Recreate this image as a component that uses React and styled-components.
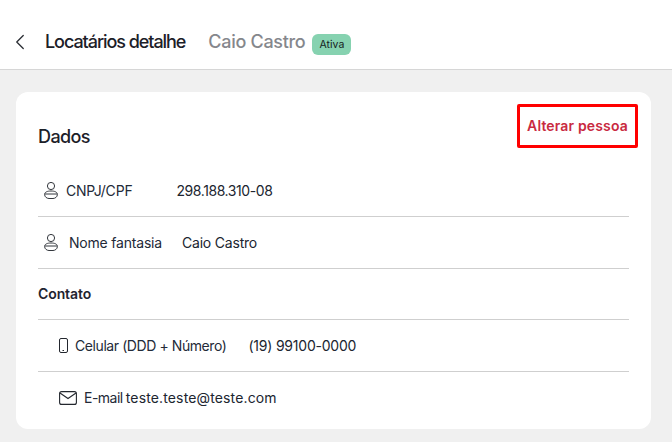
import styled, { createGlobalStyle } from "styled-components";
import { ChevronLeft } from "lucide-react";

const GlobalStyle = createGlobalStyle`
  html, body {
    margin: 0;
    padding: 0;
    height: 100%;
    overflow: hidden;
    background: #f0f0f0;
    font-family: "Inter", "Liberation Sans", sans-serif;
    color: #1f2430;
  }
`;

const PersonIcon = () => (
  <svg width="14" height="17" viewBox="0 0 14 17" fill="none" stroke="#33373d" strokeWidth="1">
    <circle cx="7" cy="4" r="3.6" />
    <path d="M.6 12.5C.6 10 3.4 9 7 9s6.4 1 6.4 3.5c0 2.5-2.4 4-4.4 4H5c-2 0-4.4-1.5-4.4-4z" />
    <path d="M.8 12h12.4" />
  </svg>
);

const PhoneIcon = () => (
  <svg width="9" height="15" viewBox="0 0 9 15" fill="none" stroke="#23272e" strokeWidth="1">
    <rect x=".5" y=".5" width="8" height="14" rx="1.5" />
    <path d="M3.5 12.5H5" />
  </svg>
);

const MailIcon = () => (
  <svg width="18" height="14" viewBox="0 0 18 14" fill="none" stroke="#23272e" strokeWidth="1.1">
    <rect x=".6" y=".6" width="16.8" height="12.8" rx="2" />
    <path d="M1 2l8 5.5L17 2" />
  </svg>
);

const App = () => {
  return (
    <>
      <GlobalStyle />
      <Header>
        <BackButton>
          <ChevronLeft size={26} strokeWidth={1.2} />
        </BackButton>
        <Title>Locatários detalhe</Title>
        <Subtitle>Caio Castro</Subtitle>
        <Badge>Ativa</Badge>
      </Header>
      <Main>
        <Card>
          <CardHead>
            <SectionTitle>Dados</SectionTitle>
            <ChangeButton>Alterar pessoa</ChangeButton>
          </CardHead>
          <Rows>
            <Row $left={6} $iconGap={8} $gap={44} $valueSpacing={-0.42}>
              <PersonIcon />
              <Label>CNPJ/CPF</Label>
              <Value>298.188.310-08</Value>
            </Row>
            <Row $left={6} $iconGap={11} $gap={20}>
              <PersonIcon />
              <Label>Nome fantasia</Label>
              <Value>Caio Castro</Value>
            </Row>
            <GroupTitle>Contato</GroupTitle>
            <Row $left={21} $iconGap={7} $gap={22} $labelSpacing={-0.42} $valueSpacing={-0.22}>
              <PhoneIcon />
              <Label>Celular (DDD + Número)</Label>
              <Value>(19) 99100-0000</Value>
            </Row>
            <Row $left={21} $iconGap={7} $gap={3} $labelSpacing={-0.5} $valueSpacing={0.14} $last>
              <MailIcon />
              <Label>E-mail</Label>
              <Value>teste.teste@teste.com</Value>
            </Row>
          </Rows>
        </Card>
      </Main>
    </>
  );
};

const Header = styled.header`
  height: 69px;
  background: #fff;
  border-bottom: 1px solid #d6d6d6;
  display: flex;
  align-items: center;
  padding-left: 7px;
`;

const BackButton = styled.button`
  width: 26px;
  height: 26px;
  padding: 0;
  margin: 15px 12px 0 0;
  border: none;
  background: none;
  color: #2a2d33;
  display: flex;
  align-items: center;
  justify-content: center;
`;

const Title = styled.h1`
  margin: 13px 23px 0 0;
  font-size: 18px;
  font-weight: 500;
  letter-spacing: -1.06px;
  color: #1c2028;
`;

const Subtitle = styled.span`
  margin: 13px 7px 0 0;
  font-size: 18px;
  font-weight: 500;
  letter-spacing: -0.3px;
  color: #85878c;
`;

const Badge = styled.span`
  width: 39px;
  height: 21px;
  margin-top: 20px;
  border-radius: 6px;
  background: #86d2b0;
  color: #16231f;
  font-size: 10.5px;
  display: flex;
  align-items: center;
  justify-content: center;
`;

const Main = styled.main`
  padding: 22px 21px 0 16px;
`;

const Card = styled.section`
  height: 337px;
  background: #fff;
  border-radius: 12px;
  box-sizing: border-box;
  padding-top: 12px;
`;

const CardHead = styled.div`
  display: flex;
  justify-content: space-between;
  align-items: flex-start;
  padding: 0 13px 0 22px;
`;

const SectionTitle = styled.h2`
  margin: 22px 0 0;
  font-size: 18px;
  line-height: 22px;
  font-weight: 500;
  letter-spacing: -0.6px;
  color: #1c2028;
`;

const ChangeButton = styled.button`
  width: 121px;
  height: 44px;
  box-sizing: border-box;
  padding: 0 0 2px;
  border: 3px solid #ff0000;
  border-radius: 2px;
  background: #fff;
  color: #c92a3f;
  font-family: inherit;
  font-size: 14px;
  font-weight: 600;
  letter-spacing: 0.15px;
`;

const Rows = styled.div`
  margin: 17px 22px 0;
`;

const Row = styled.div`
  height: 51px;
  display: flex;
  align-items: center;
  padding-left: ${(p) => p.$left}px;
  border-bottom: ${(p) => (p.$last ? "none" : "1px solid #cfcfcf")};
  font-size: 14px;

  > svg {
    flex: none;
    margin-right: ${(p) => p.$iconGap}px;
  }

  > span:first-of-type {
    margin-right: ${(p) => p.$gap}px;
    letter-spacing: ${(p) => p.$labelSpacing ?? -0.2}px;
  }

  > span:last-of-type {
    letter-spacing: ${(p) => p.$valueSpacing ?? -0.2}px;
  }
`;

const Label = styled.span`
  color: #232a38;
`;

const Value = styled.span`
  color: #20252f;
`;

const GroupTitle = styled.h3`
  margin: 0;
  padding-bottom: 2px;
  box-sizing: border-box;
  height: 51px;
  display: flex;
  align-items: center;
  border-bottom: 1px solid #cfcfcf;
  font-size: 14px;
  font-weight: 600;
  letter-spacing: -0.1px;
  color: #1f2430;
`;

export default App;
